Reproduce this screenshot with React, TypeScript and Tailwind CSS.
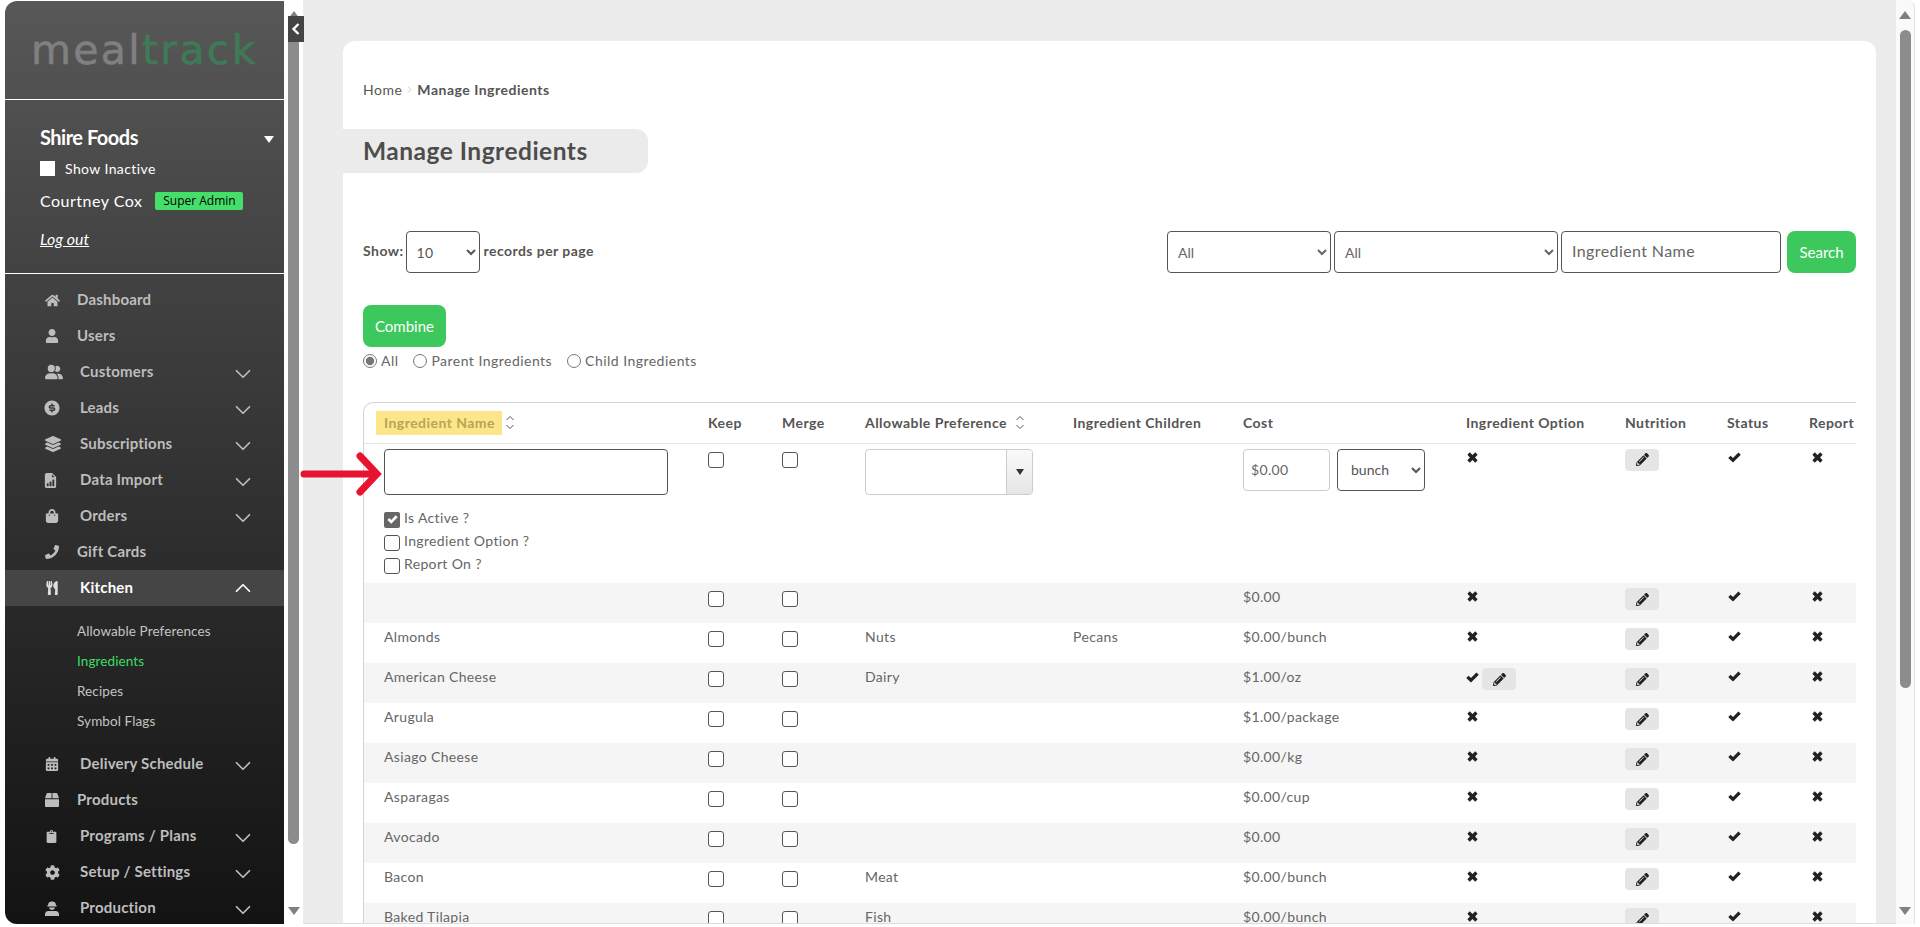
import React from "react";
import { ChevronDown, ChevronUp, ChevronRight } from "lucide-react";
import {
  FaHome, FaUser, FaLayerGroup, FaShoppingBag, FaPhone, FaUtensils, FaCalendarAlt,
  FaBox, FaClipboard, FaCog, FaPencilAlt,
} from "react-icons/fa";
import { FaUserGroup } from "react-icons/fa6";
import { RiMoneyDollarCircleFill } from "react-icons/ri";
import { BsFileEarmarkBarGraphFill } from "react-icons/bs";

const FONT = { fontFamily: '"Lato", "Noto Sans", sans-serif' };

type Item = { label: string; icon: React.ReactNode; sub?: boolean };

function Worker() {
  return (
    <svg width="14" height="15" viewBox="0 0 14 15" fill="currentColor">
      <path d="M3 4.5 A4 4 0 0 1 11 4.5 L11.8 4.5 L11.8 5.6 L2.2 5.6 L2.2 4.5 Z" />
      <path d="M3.8 6.4 H10.2 A3.3 3.3 0 0 1 3.8 6.4 Z" />
      <path d="M0 15 V13.4 A3.6 3.6 0 0 1 3.6 10 H10.4 A3.6 3.6 0 0 1 14 13.4 V15 Z" />
    </svg>
  );
}

function IconX({ cls = "" }: { cls?: string }) {
  return (
    <svg width="11" height="11" viewBox="0 0 12 12" fill="#222" className={`block ${cls}`}>
      <polygon points="3,0.4 6,3.2 9,0.4 11.6,3 8.8,6 11.6,9 9,11.6 6,8.8 3,11.6 0.4,9 3.2,6 0.4,3" />
    </svg>
  );
}

function IconOk({ cls = "" }: { cls?: string }) {
  return (
    <svg width="13" height="11" viewBox="0 0 13 11" fill="#222" className={`block ${cls}`}>
      <polygon points="0.2,6 2.6,3.7 5,6 10.4,0.4 12.8,2.8 5,10.6" />
    </svg>
  );
}

const top: Item[] = [
  { label: "Dashboard", icon: <FaHome size={15} /> },
  { label: "Users", icon: <FaUser size={14} /> },
  { label: "Customers", icon: <FaUserGroup size={18} />, sub: true },
  { label: "Leads", icon: <RiMoneyDollarCircleFill size={18} className="-ml-0.5" />, sub: true },
  { label: "Subscriptions", icon: <FaLayerGroup size={16} />, sub: true },
  { label: "Data Import", icon: <BsFileEarmarkBarGraphFill size={15} className="-ml-0.5" />, sub: true },
  { label: "Orders", icon: <FaShoppingBag size={14} />, sub: true },
  { label: "Gift Cards", icon: <FaPhone size={14} /> },
];
const bottom: Item[] = [
  { label: "Delivery Schedule", icon: <FaCalendarAlt size={14} />, sub: true },
  { label: "Products", icon: <FaBox size={14} /> },
  { label: "Programs / Plans", icon: <FaClipboard size={13} />, sub: true },
  { label: "Setup / Settings", icon: <FaCog size={15} />, sub: true },
  { label: "Production", icon: <Worker />, sub: true },
];

function MenuRow({ item }: { item: Item }) {
  return (
    <div className="flex h-9 items-center pl-[40px] text-[15px] font-bold tracking-[0.2px] text-[#bdbdbd]">
      <span className="flex w-[32px] shrink-0 items-center">{item.icon}</span>
      <span className={item.sub ? "ml-[3px] pb-[2px]" : "pb-[2px]"}>{item.label}</span>
      {item.sub && <ChevronDown size={26} strokeWidth={1.6} className="ml-auto mr-[28px] mt-[4px]" />}
    </div>
  );
}

function Sidebar() {
  return (
    <aside className="mt-px flex w-[279px] shrink-0 flex-col overflow-hidden rounded-l-[12px] bg-gradient-to-b from-[#585858] to-[#131313] text-white">
      <div className="flex h-[98px] shrink-0 items-start pl-[26px] pt-[26px] text-[41px] leading-[46px] tracking-[2.3px] [-webkit-text-stroke:0.6px]" style={{ fontFamily: '"DejaVu Sans", sans-serif' }}>
        <span className="text-[#808080]">meal</span>
        <span className="text-[#3f7a58]">track</span>
      </div>
      <div className="h-[175px] shrink-0 border-y border-white pl-[35px] pt-[26px]">
        <div className="flex h-[22px] items-center text-[20px] font-bold tracking-[-0.5px]">
          <span>Shire Foods</span>
          <span className="ml-auto mr-[10px] mt-[4px] h-0 w-0 border-x-[5px] border-t-[7px] border-x-transparent border-t-white" />
        </div>
        <div className="mt-[12px] flex h-4 items-center text-[14px] tracking-[0.4px]">
          <span className="h-[15px] w-[15px] bg-white" />
          <span className="ml-[10px]">Show Inactive</span>
        </div>
        <div className="mt-[15px] flex h-5 items-center">
          <span className="text-[16px] tracking-[0.5px]">Courtney Cox</span>
          <span className="ml-[13px] flex h-[18px] w-[88px] items-center justify-center rounded-[2px] bg-[#45de6b] text-[12px] text-black" style={{ fontFamily: '"Open Sans", sans-serif' }}>Super Admin</span>
        </div>
        <div className="mt-[18px] h-5 text-[16px] italic leading-5 underline">Log out</div>
      </div>
      <div className="shrink-0 pt-2">
        {top.map((i) => <MenuRow key={i.label} item={i} />)}
        <div className="flex h-9 items-center bg-[#454545] pl-[40px] text-[15px] font-bold tracking-[0.2px] text-white">
          <span className="flex w-[32px] shrink-0 items-center text-[#e0e0e0]"><FaUtensils size={14} /></span>
          <span className="ml-[3px] pb-[2px]">Kitchen</span>
          <ChevronUp size={26} strokeWidth={1.6} className="ml-auto mr-[28px]" />
        </div>
        <div className="py-[10px] pl-[72px] text-[13.5px] tracking-[0.1px] text-[#c4c4c4]">
          <div className="flex h-[30px] items-center">Allowable Preferences</div>
          <div className="flex h-[30px] items-center text-[#3ddc62]">Ingredients</div>
          <div className="flex h-[30px] items-center">Recipes</div>
          <div className="flex h-[30px] items-center">Symbol Flags</div>
        </div>
        {bottom.map((i) => <MenuRow key={i.label} item={i} />)}
      </div>
    </aside>
  );
}

function Scrollbar({ thumb, className }: { thumb: number; className: string }) {
  return (
    <div className={`flex w-[19px] shrink-0 flex-col items-center pt-[11px] pb-[9px] ${className}`}>
      <span className="h-0 w-0 border-x-[6px] border-b-[8px] border-x-transparent border-b-[#808080]" />
      <div className="mt-[11px] w-[11px] rounded-full bg-[#8c8c8c]" style={{ height: thumb }} />
      <span className="mt-auto h-0 w-0 border-x-[6px] border-t-[8px] border-x-transparent border-t-[#808080]" />
    </div>
  );
}

function Check({ on, cls = "" }: { on?: boolean; cls?: string }) {
  return on ? (
    <span className={`flex h-4 w-4 shrink-0 items-center justify-center rounded-[2px] bg-[#666] ${cls}`}>
      <svg width="11" height="9" viewBox="0 0 13 11" fill="#fff"><polygon points="0.2,6 2.6,3.7 5,6 10.4,0.4 12.8,2.8 5,10.6" /></svg>
    </span>
  ) : (
    <span className={`block h-4 w-4 shrink-0 rounded-[3px] border border-[#555] bg-white ${cls}`} />
  );
}

function Edit({ cls = "" }: { cls?: string }) {
  return (
    <span className={`flex h-[22px] w-[34px] items-center justify-center rounded-[4px] bg-[#e5e5e5] text-[#222] ${cls}`}>
      <FaPencilAlt size={13} />
    </span>
  );
}

function Sort() {
  return (
    <svg width="10" height="15" viewBox="0 0 10 15" fill="none" stroke="#555" strokeWidth="1" className="ml-[3px] inline-block shrink-0">
      <path d="M1.5 5 L5 1.5 L8.5 5" />
      <path d="M1.5 10 L5 13.5 L8.5 10" />
    </svg>
  );
}

const rows: { name: string; pref?: string; child?: string; cost: string; opt?: boolean }[] = [
  { name: "", cost: "$0.00" },
  { name: "Almonds", pref: "Nuts", child: "Pecans", cost: "$0.00/bunch" },
  { name: "American Cheese", pref: "Dairy", cost: "$1.00/oz", opt: true },
  { name: "Arugula", cost: "$1.00/package" },
  { name: "Asiago Cheese", cost: "$0.00/kg" },
  { name: "Asparagas", cost: "$0.00/cup" },
  { name: "Avocado", cost: "$0.00" },
  { name: "Bacon", pref: "Meat", cost: "$0.00/bunch" },
  { name: "Baked Tilapia", pref: "Fish", cost: "$0.00/bunch" },
];

const th = "h-10 p-0 text-left align-middle text-[14px] font-bold tracking-[0.45px] text-[#555]";
const td = "h-10 p-0 pt-[4px] align-top text-[14px] leading-5 tracking-[0.35px] text-[#666]";
const cell = "h-10 p-0 align-top";

function Table() {
  return (
    <div className="mt-[31px] overflow-hidden rounded-tl-[10px] border-l border-t border-[#d4d4d4]">
      <table className="w-[1520px] table-fixed border-collapse" style={FONT}>
        <colgroup>
          <col className="w-[344px]" /><col className="w-[74px]" /><col className="w-[83px]" /><col className="w-[208px]" />
          <col className="w-[170px]" /><col className="w-[223px]" /><col className="w-[159px]" /><col className="w-[102px]" />
          <col className="w-[82px]" /><col className="w-[75px]" />
        </colgroup>
        <thead>
          <tr className="border-b border-[#e6e6e6]">
            <th className={th + " pl-[12px]"}>
              <div className="flex items-center">
                <span className="flex h-6 w-[126px] items-center bg-[#fde68a] pl-2 text-[#b8a552]">Ingredient Name</span>
                <Sort />
              </div>
            </th>
            <th className={th}>Keep</th>
            <th className={th}>Merge</th>
            <th className={th}><div className="flex items-center">Allowable Preference<span className="ml-[5px] flex"><Sort /></span></div></th>
            <th className={th}>Ingredient Children</th>
            <th className={th}>Cost</th>
            <th className={th}>Ingredient Option</th>
            <th className={th}>Nutrition</th>
            <th className={th}>Status</th>
            <th className={th}>Report</th>
          </tr>
        </thead>
        <tbody>
          <tr className="h-[140px]">
            <td className="p-0 pl-5 pt-[5px] align-top text-[14px] tracking-[0.35px] text-[#666]">
              <div className="h-[46px] w-[284px] rounded-[4px] border border-[#555] bg-white" />
              <div className="mt-[17px] flex h-[23px] items-start gap-1"><Check on /><span className="-mt-[5px]">Is Active ?</span></div>
              <div className="flex h-[23px] items-start gap-1"><Check /><span className="-mt-[5px]">Ingredient Option ?</span></div>
              <div className="flex h-[23px] items-start gap-1"><Check /><span className="-mt-[5px]">Report On ?</span></div>
            </td>
            <td className="p-0 pt-2 align-top"><Check /></td>
            <td className="p-0 pt-2 align-top"><Check /></td>
            <td className="p-0 pt-[5px] align-top">
              <div className="flex h-[46px] w-[168px] overflow-hidden rounded-[4px] border border-[#ccc] bg-white">
                <span className="flex-1" />
                <span className="flex w-[26px] items-center justify-center border-l border-[#ccc] bg-gradient-to-b from-[#fafafa] to-[#e6e6e6]">
                  <span className="h-0 w-0 border-x-[4px] border-t-[6px] border-x-transparent border-t-[#333]" />
                </span>
              </div>
            </td>
            <td className="p-0" />
            <td className="p-0 pt-[5px] align-top">
              <div className="flex items-start gap-[7px]">
                <input readOnly value="$0.00" className="h-[42px] w-[87px] rounded-[4px] border border-[#ccc] bg-white px-[7px] text-[14px] tracking-[0.35px] text-[#666]" />
                <select defaultValue="bunch" className="h-[42px] w-[88px] rounded-[4px] border border-[#555] bg-white pl-[9px] text-[14px] text-[#555]">
                  <option>bunch</option>
                </select>
              </div>
            </td>
            <td className="p-0 pt-2 align-top"><IconX cls="ml-px" /></td>
            <td className="p-0 pt-[5px] align-top"><Edit /></td>
            <td className="p-0 pt-2 align-top"><IconOk cls="ml-px" /></td>
            <td className="p-0 pt-2 align-top"><IconX cls="ml-[3px]" /></td>
          </tr>
          {rows.map((r, i) => (
            <tr key={r.name + i} className={i % 2 === 0 ? "bg-[#f5f5f5]" : "bg-white"}>
              <td className={td + " pl-5"}>{r.name}</td>
              <td className={cell + " pt-2"}><Check /></td>
              <td className={cell + " pt-2"}><Check /></td>
              <td className={td}>{r.pref}</td>
              <td className={td}>{r.child}</td>
              <td className={td}>{r.cost}</td>
              <td className={cell + " pt-[5px]"}>
                {r.opt ? (
                  <div className="flex items-start"><IconOk cls="mt-[4px]" /><Edit cls="ml-[3px]" /></div>
                ) : (
                  <IconX cls="ml-px mt-[3px]" />
                )}
              </td>
              <td className={cell + " pt-[5px]"}><Edit /></td>
              <td className={cell + " pt-2"}><IconOk cls="ml-px" /></td>
              <td className={cell + " pt-2"}><IconX cls="ml-[3px]" /></td>
            </tr>
          ))}
        </tbody>
      </table>
    </div>
  );
}

function Radio({ label, on }: { label: string; on?: boolean }) {
  return (
    <label className="flex items-center gap-[4px]">
      <input type="radio" name="kind" defaultChecked={on} className="m-0 h-[14px] w-[14px] accent-[#777]" />
      <span className="pb-[2px]">{label}</span>
    </label>
  );
}

function Main() {
  return (
    <main className="flex min-w-0 flex-1 border-b border-[#dcdcdc] bg-[#ececec] pl-10 pr-5 pt-[41px]">
      <div className="min-w-0 flex-1 overflow-hidden rounded-t-[12px] bg-white px-5 pt-[38px]">
        <div className="flex h-5 items-center text-[14px] tracking-[0.5px] text-[#555]">
          <span>Home</span>
          <ChevronRight size={11} strokeWidth={1} className="mx-[2px] text-[#888]" />
          <span className="font-bold">Manage Ingredients</span>
        </div>
        <div className="-ml-5 mt-[30px] flex h-[44px] w-[305px] items-center rounded-r-[12px] bg-[#ebebeb] pl-5 text-[24.5px] font-bold tracking-[0.5px] text-[#4d4d4d]">
          Manage Ingredients
        </div>
        <div className="mt-[58px] flex h-[42px] items-center justify-between">
          <div className="flex items-center text-[14px] font-bold tracking-[0.45px] text-[#555]">
            <span className="pb-[4px]">Show:</span>
            <select defaultValue="10" className="ml-[2px] h-[42px] w-[74px] rounded-[4px] border border-[#555] bg-white pl-[6px] text-[14px] font-normal text-[#555]">
              <option>10</option>
            </select>
            <span className="ml-1 pb-[4px]">records per page</span>
          </div>
          <div className="flex items-center">
            <select defaultValue="All" className="h-[42px] w-[164px] rounded-[4px] border border-[#555] bg-white pl-[6px] text-[14px] text-[#666]"><option>All</option></select>
            <select defaultValue="All" className="ml-[3px] h-[42px] w-[224px] rounded-[4px] border border-[#555] bg-white pl-[6px] text-[14px] text-[#666]"><option>All</option></select>
            <input placeholder="Ingredient Name" className="ml-[3px] h-[42px] w-[220px] rounded-[4px] border border-[#555] bg-white pb-[3px] pl-[10px] text-[16px] tracking-[0.4px] placeholder:text-[#666]" />
            <button className="ml-[6px] h-[42px] w-[69px] rounded-[8px] bg-[#3cc85c] text-[15px] text-white">Search</button>
          </div>
        </div>
        <button className="mt-[32px] block h-[42px] w-[83px] rounded-[8px] bg-[#3cc85c] text-[15px] text-white">Combine</button>
        <div className="mt-[4px] flex h-5 items-center gap-[15px] text-[14px] tracking-[0.47px] text-[#666]">
          <Radio label="All" on />
          <Radio label="Parent Ingredients" />
          <Radio label="Child Ingredients" />
        </div>
        <Table />
      </div>
    </main>
  );
}

export default function App() {
  return (
    <div className="relative flex h-[927px] w-full overflow-hidden bg-white pb-[3px] pl-[5px] pr-[5px]" style={FONT}>
      <Sidebar />
      <Scrollbar thumb={814} className="bg-white" />
      <Main />
      <Scrollbar thumb={658} className="rounded-tr-[8px] border-r border-[#e2e2e2] bg-[#fafafa]" />
      <button className="absolute left-[288px] top-[16px] flex h-[26px] w-[16px] items-center justify-center bg-[#444] text-white">
        <svg width="10" height="14" viewBox="0 0 10 14" fill="none" stroke="currentColor" strokeWidth="2.4"><path d="M7.5 2 L2.5 7 L7.5 12" /></svg>
      </button>
      <svg width="84" height="46" viewBox="0 0 84 46" fill="none" stroke="#e8132f" strokeWidth="7" strokeLinecap="round" strokeLinejoin="miter" className="absolute left-[300px] top-[452px]">
        <path d="M4 22 H74" />
        <path d="M60 4 L77 22 L60 40" />
      </svg>
    </div>
  );
}
